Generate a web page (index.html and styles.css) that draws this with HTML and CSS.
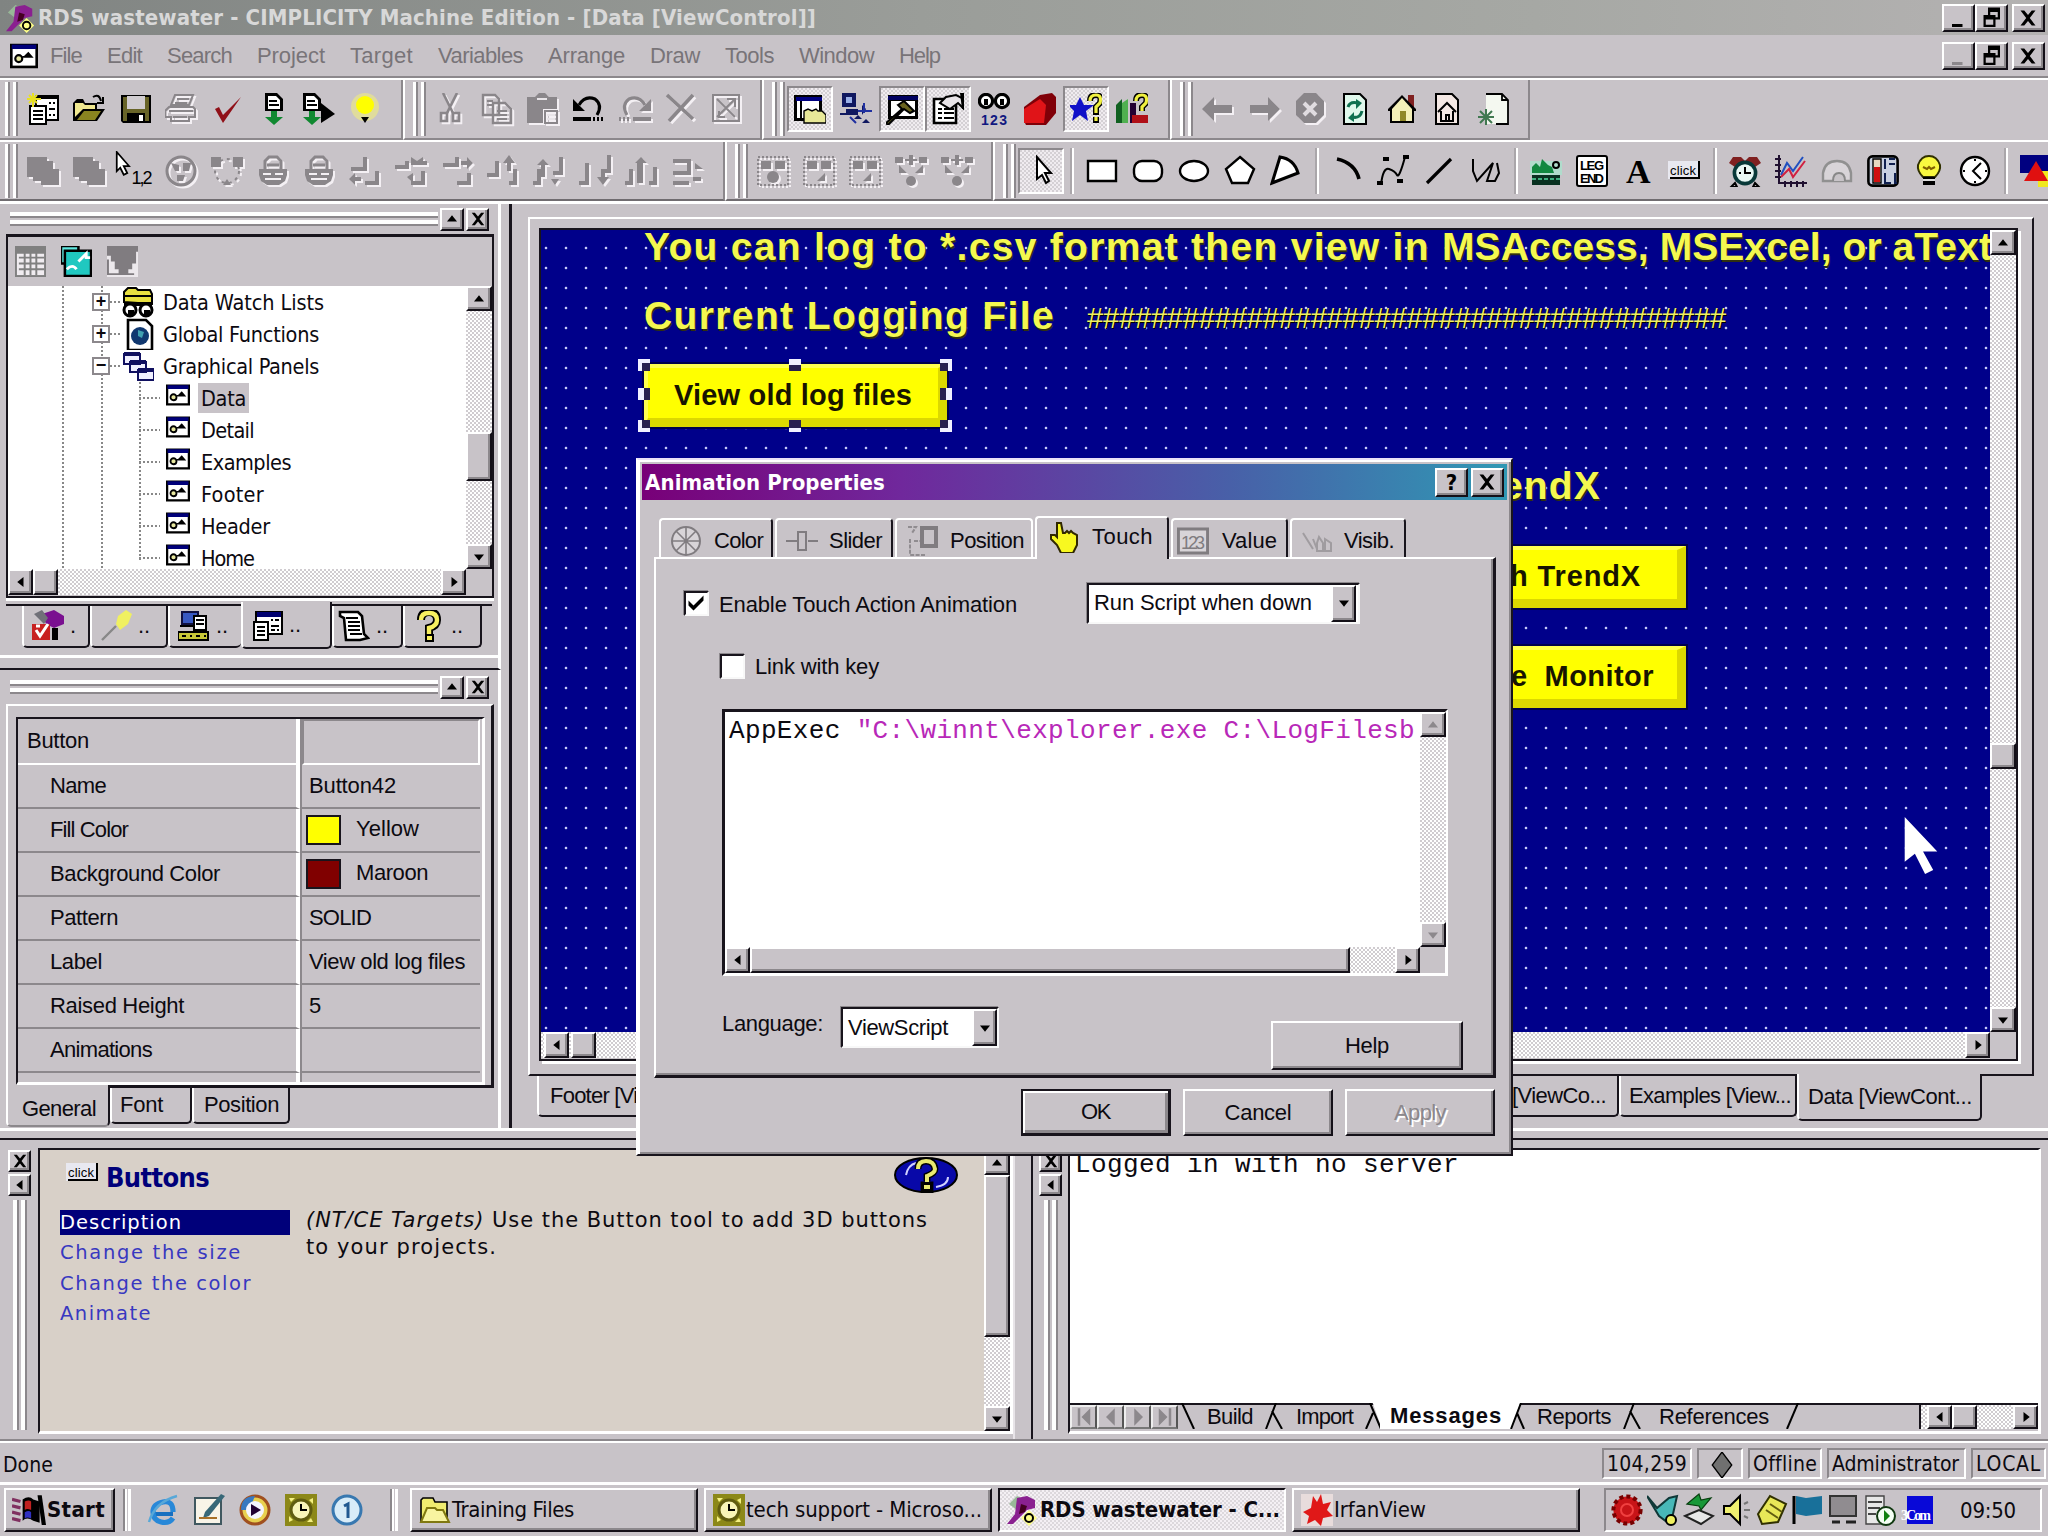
FILE: index.html
```html
<!DOCTYPE html>
<html lang="en">
<head>
    <meta charset="UTF-8">
    <title>RDS wastewater - CIMPLICITY Machine Edition</title>
    <link rel="stylesheet" href="styles.css">
</head>
<body>

<!-- Icon set, drawn on a 16x16 pixel grid -->
<svg class="defs">
    <symbol id="up" viewBox="0 0 16 16"><path d="M8 5l4 5H4z"/></symbol>
    <symbol id="down" viewBox="0 0 16 16"><path d="M4 6h8l-4 5z"/></symbol>
    <symbol id="left" viewBox="0 0 16 16"><path d="M10 4v8L5 8z"/></symbol>
    <symbol id="right" viewBox="0 0 16 16"><path d="M6 4v8l5-4z"/></symbol>
    <symbol id="first" viewBox="0 0 16 16"><path d="M13 1v14L6 8zM3 1h2v14H3z"/></symbol>
    <symbol id="prev" viewBox="0 0 16 16"><path d="M11 1v14L4 8z"/></symbol>
    <symbol id="next" viewBox="0 0 16 16"><path d="M5 1v14l7-7z"/></symbol>
    <symbol id="last" viewBox="0 0 16 16"><path d="M3 1v14l7-7zM11 1h2v14h-2z"/></symbol>
    <symbol id="close" viewBox="0 0 16 16"><path d="M3 3h2.500L8 6l2.500-3H13L9.200 8l3.800 5h-2.500L8 10l-2.500 3H3l3.800-5z"/></symbol>
    <symbol id="min" viewBox="0 0 16 16"><path d="M4 12h7v2H4z"/></symbol>
    <symbol id="restore" viewBox="0 0 16 16"><path d="M6 1h8v8h-3v5H3V6h3zM7.500 4V6H11v1.500h1.500V4zM4.500 9v3.500h5V9z" fill-rule="evenodd"/></symbol>
    <symbol id="panel" viewBox="0 0 16 16"><path fill="#000" d="M0 1h16v14H0z"/><path fill="#fff" d="M1.500 4h13v9.500h-13z"/><path fill="#00007a" d="M1 1.500h14V4H1z"/><circle cx="5" cy="9.500" r="2" fill="#e8e8a0" stroke="#000" stroke-width="1.200"/><path d="M7 8h1l2.500-2.500L13.500 9H7z"/></symbol>
    <symbol id="app" viewBox="0 0 16 16"><path d="M1 5l4-4 4 2-4 5z" fill="#98b898"/><path d="M5 2l5-1 4 2v4l-4 1-3 3-4 4H0l4-5z" fill="#8a2090"/><path d="M7 5l3 1-1 3-3 1z" fill="#402"/><path d="M11 8l4 4-4 4-4-4z" fill="#ff8"/><circle cx="11" cy="12" r="2" fill="none" stroke="#000"/></symbol>

    <symbol id="new" viewBox="0 0 16 16"><path fill="#000" d="M4 1h12v13H4z"/><path fill="#fff" d="M5 3h10v10H5z"/><path fill="#000" d="M1 6h9v10H1z"/><path fill="#fff" d="M2 7h7v8H2z"/><path d="M3 9h5M3 11h5M3 13h5M11 5h1M13 5h1M11 8h3M11 11h1M13 11h1" stroke="#000"/><path d="M3 0v7M0 3h7M1 1l4 4M5 1L1 5" stroke="#e8e020"/></symbol>
    <symbol id="project" viewBox="0 0 16 16"><path d="M2 1h14v12H2z"/><path fill="#fff" d="M3 4h12v8H3z"/><path fill="#000070" d="M3 1.500h12V4H3z"/><path d="M1 6h8v10H1z"/><path fill="#fff" d="M2 7h6v8H2z"/><path d="M3 9h4M3 11h4M3 13h4M10 5.500h1M12 5.500h2M10 8.500h4M10 10.500h2M13 10.500h1" stroke="#000"/></symbol>
    <symbol id="open" viewBox="0 0 16 16"><path d="M0 14V5l2-2h3l1 2h6v3h4l-4 6z"/><path d="M1 12V5h4l1 1h5v2H5z" fill="#f0e890"/><path d="M2 13.500L5.500 9H14l-3 4.500z" fill="#8a8420"/><path d="M10 2q3-2 4 2M15 2v3h-3" stroke="#000" fill="none"/></symbol>
    <symbol id="save" viewBox="0 0 16 16"><path d="M1 1h15v14H2l-1-1z"/><path d="M2 2h13v12H2z" fill="#686428"/><path d="M4 1.500h9V8H4z" fill="#d0ccd0"/><path d="M4 10h9v5H4z"/><path d="M10 11h2v3h-2z" fill="#fff"/></symbol>
    <symbol id="print" viewBox="0 0 16 16"><path d="M5 1h9l-2 5H3zM2 7h12l1 1v4h-3v2H3v-2H0V9z" fill="none" stroke="currentColor"/><path d="M6 3h6M5 5h6M2 9h12M4 12h7" stroke="currentColor"/></symbol>
    <symbol id="check" viewBox="0 0 16 16"><path d="M2 8l2-1 2 4 9-9-9 13z" fill="#901018"/></symbol>
    <symbol id="download" viewBox="0 0 16 16"><path d="M4 0h6l3 3v6H4z"/><path d="M5.500 1.500h4l2 2V8h-6z" fill="#fff"/><path d="M6 4h4M6 6h5" stroke="#000"/><path d="M7 9h3v3h3l-4.500 4L4 12h3z" fill="#108830"/></symbol>
    <symbol id="run" viewBox="0 0 16 16"><path d="M0 0h6l3 3v6H0z"/><path d="M1.500 1.500h4l2 2V8h-6z" fill="#fff"/><path d="M2 4h4M2 6h5" stroke="#000"/><path d="M3 9h3v3h3l-4.500 4L0 12h3z" fill="#108830"/><path d="M9 5l7 5.500L9 15z"/></symbol>
    <symbol id="glow" viewBox="0 0 16 16"><circle cx="8" cy="7" r="7" fill="#e0dc9c"/><circle cx="8" cy="6" r="4.500" fill="#ff0"/><path d="M6 12h4l-2 3z"/></symbol>
    <symbol id="cut" viewBox="0 0 16 16"><path d="M4 0l5 10M11 0L6 10" stroke="currentColor" stroke-width="1.300"/><path d="M3 10h3v4H3zM9 10h3v4H9z" fill="none" stroke="currentColor" stroke-width="1.300"/></symbol>
    <symbol id="copy" viewBox="0 0 16 16"><path d="M1 1h6l2 2v8H1zM6 5h6l3 3v7H6z" fill="none" stroke="currentColor" stroke-width="1.200"/><path d="M3 4h3M3 6h3M8 9h5M8 11h5M8 13h5" stroke="currentColor"/></symbol>
    <symbol id="paste" viewBox="0 0 16 16"><path d="M0 2h4l2-2h3l2 2h4v6H8v7H0z"/><path d="M9 9h6v6H9z" fill="none" stroke="currentColor"/><path d="M10 11h4M10 13h4M5 3h5" stroke="#e8e4e8"/></symbol>
    <symbol id="undo" viewBox="0 0 16 16"><path d="M3 6q3-5 8-3 4 3 1 8" fill="none" stroke="currentColor" stroke-width="1.500"/><path d="M0 3v6h6zM0 12h9v2H0zM10 12h1v2h-1zM12 12h1v2h-1zM14 12h1v2h-1z"/></symbol>
    <symbol id="redo" viewBox="0 0 16 16"><path d="M13 6q-3-5-8-3-4 3-1 8" fill="none" stroke="currentColor" stroke-width="1.500"/><path d="M16 3v6h-6zM7 12h9v2H7zM0 12h1v2H0zM2 12h1v2H2zM4 12h1v2H4z"/></symbol>
    <symbol id="del" viewBox="0 0 16 16"><path d="M1 1l13 12M14 1L2 14" stroke="currentColor" stroke-width="1.800"/></symbol>
    <symbol id="props" viewBox="0 0 16 16"><path d="M1 1h13v13H1z" fill="none" stroke="currentColor"/><path d="M3 3l9 9M12 3l-9 9M8 3h4v4M4 9v3h3" stroke="currentColor" fill="none"/></symbol>
    <symbol id="navigator" viewBox="0 0 16 16"><path d="M0 1h14v13H0z"/><path d="M1.500 4h11v8.500h-11z" fill="#fff"/><path d="M1 2h13v2H1z" fill="#000080"/><path d="M3 4h1v9H3z"/><path d="M5 15V9l2-1 2 1 2-1 1 1h2l2 2v4z" fill="#e8e898" stroke="#000" stroke-width=".7"/></symbol>
    <symbol id="browse" viewBox="0 0 16 16"><path d="M1 0h7v7H1zM3 8h6v3H3zM0 10h5v1H0zM7 13l2-2 2 2zM11 6l2 2-2 3zM12 8l3 1M13 13l2 2h-4zM5 12l3 3" fill="#101860"/><path d="M3 2h3v3H3z" fill="#9ab0e8"/><path d="M5 12l3 3M12 5v5M9 9h7" stroke="#2030a0"/></symbol>
    <symbol id="hammer" viewBox="0 0 16 16"><path d="M1 1h15v12H1z"/><path d="M2.500 4h12v7.500h-12z" fill="#fff"/><path d="M1 1.500h15V3.500H1z" fill="#000060"/><path d="M6 6l3-2 5 5-2 1-3-2-8 8-1-1 8-7z" fill="#6a6420" stroke="#000"/></symbol>
    <symbol id="inspect" viewBox="0 0 16 16"><path d="M1 3h11v12H1z" fill="#fff" stroke="#000" stroke-width="1.300"/><path d="M3 8h2M6 8h5M3 10h2M6 10h5M3 12.500h2M6 12.500h5" stroke="#000"/><path d="M4 5l3-3 5-1 4 2v5l-3-3-4 3z" fill="#e8e4e8" stroke="#000"/><path d="M14 0h2v8h-1z"/></symbol>
    <symbol id="watch" viewBox="0 0 16 16"><circle cx="4" cy="4" r="3.300" fill="#fff" stroke="#000" stroke-width="1.600"/><circle cx="12" cy="4" r="3.300" fill="#fff" stroke="#000" stroke-width="1.600"/><path d="M3 3h2v3H3zM11 3h2v3h-2z"/><text x="1.500" y="16" class="t-123" textLength="13">123</text></symbol>
    <symbol id="red" viewBox="0 0 16 16"><path d="M0 7L8 1l6-1 2 2v8l-5 6H1l-1-2z" fill="#800008"/><path d="M0 8l8-5 3 3-1 9H0z" fill="#e01418"/></symbol>
    <symbol id="star" viewBox="0 0 16 16"><path d="M5 2l2 4h5L8 9l1 5-4-3-4 3 1-5-3-3h4z" fill="#1010c8"/><path d="M10 4q0-3 3-3t2 4l-2 2v4M13 12v3" fill="none" stroke="#000" stroke-width="3"/><path d="M10 4q0-3 3-3t2 4l-2 2v3M13 12v2" fill="none" stroke="#f0f040" stroke-width="1.600"/></symbol>
    <symbol id="books" viewBox="0 0 16 16"><path d="M0 6l3-3v12H0z" fill="#106020"/><path d="M3 5l3-2v12H3z" fill="#50b050"/><path d="M7 5h3v10H7z" fill="#203"/><path d="M8 11h8v4H8z" fill="#b01018"/><path d="M10 4q0-3 3-3t2 4l-2 2v2" fill="none" stroke="#000" stroke-width="3"/><path d="M10 4q0-3 3-3t2 4l-2 2v2" fill="none" stroke="#f0f040" stroke-width="1.600"/></symbol>
    <symbol id="back" viewBox="0 0 16 16"><path d="M0 8l6-6v4h9v4H6v4z"/></symbol>
    <symbol id="fwd" viewBox="0 0 16 16"><path d="M16 8l-6-6v4H1v4h9v4z"/></symbol>
    <symbol id="stop" viewBox="0 0 16 16"><path d="M5 0h6l4 4v7l-4 4H5l-4-4V4z"/><path d="M5 5l6 6M11 5l-6 6" stroke="#e0dce0" stroke-width="2"/></symbol>
    <symbol id="refresh" viewBox="0 0 16 16"><path d="M2 .5h8l3 3v12H2z" fill="#e0f8ec" stroke="#000"/><path d="M4 7q1-3 5-2M11 9q-1 4-5 3" fill="none" stroke="#107050" stroke-width="1.500"/><path d="M8 3l3 2-3 3zM7 9.500v5l-3-2z" fill="#107050"/></symbol>
    <symbol id="home" viewBox="0 0 16 16"><path d="M11 1h3v6h-3z" fill="#802020"/><path d="M1 8l7-7 7 7v1h-1v6H2V9H1z"/><path d="M3 8l5-5.500L13 8v6H3z" fill="#f4f0b8"/><path d="M7 9h3v5H7z" fill="#908828"/></symbol>
    <symbol id="homepage" viewBox="0 0 16 16"><path d="M2 .5h8l3 3v12H2z" fill="#f4e8e4" stroke="#000"/><path d="M3 9.500L7.500 5l4.500 4.500M4.500 9v5h6V9M7 14v-3h1.500v3" fill="none" stroke="#000"/></symbol>
    <symbol id="newpage" viewBox="0 0 16 16"><path d="M4 .5h8l3 3v12H4z" fill="#f4f8f0"/><path d="M4 .5h8l3 3v12H9M12 .5v3h3" fill="none" stroke="#000" stroke-width=".9"/><path d="M4 8v8M0 12h8M1 9l6 6M7 9l-6 6" stroke="#407850"/></symbol>

    <symbol id="blob" viewBox="0 0 16 16"><path d="M0 1h10v2h3v4h3v8H7v-2H3v-2H0z"/></symbol>
    <symbol id="order" viewBox="0 0 16 16"><path d="M1 0v11l2-2 2 4 2-1-2-4h3z" fill="#fff" stroke="#000"/></symbol>
    <symbol id="group" viewBox="0 0 16 16"><circle cx="8" cy="8" r="7" fill="none" stroke="currentColor" stroke-width="1.500"/><path d="M3 4l4 1v3H5zM9 4h4l-1 4H9zM6 10h4l-1 3H6z"/></symbol>
    <symbol id="ungroup" viewBox="0 0 16 16"><path d="M0 1h5v5H0zM11 1h5v5h-5zM6 15l2-3 2 3z"/><circle cx="8" cy="8" r="6" fill="none" stroke="currentColor" stroke-dasharray="1.500 2"/></symbol>
    <symbol id="lock" viewBox="0 0 16 16"><path d="M4 7V3l2-2h4l2 2v4M5 5h6" fill="none" stroke="currentColor" stroke-width="1.500"/><path d="M1 7h14v3l-1 3-3 2H5l-3-2-1-3zM3 9v1h4V9zm6 0v1h4V9zm-5 2.500v1h8v-1z" fill-rule="evenodd"/></symbol>
    <symbol id="al" viewBox="0 0 16 16"><path d="M1 6h6V1h2v7H1zM8 13h5V8h2v7H8zM0 12l3-3v2h3v2H3v2z"/></symbol>
    <symbol id="alr" viewBox="0 0 16 16"><path d="M0 5h5V3h2v4H0zM8 13h5V8h2v7H8zM8 1l3 2 3-2v2h2v2H8zM6 11l3-2v5z"/></symbol>
    <symbol id="ar" viewBox="0 0 16 16"><path d="M1 4h6V1h2v5H1zM8 13h5V9h2v6H8zM16 4l-3-3v2h-3v2h3v2z"/></symbol>
    <symbol id="av" viewBox="0 0 16 16"><path d="M0 9h4V3h2v8H0zM11 13h2V7h2v8h-4zM11 0l3 4h-2v4h-2V4H8z"/></symbol>
    <symbol id="ag" viewBox="0 0 16 16"><path d="M0 13h2V7h2v8H0zM13 1h2v9h-5V8h3zM5 2l3 3H6v6H4V5H2zM11 15l-2-3h4z"/></symbol>
    <symbol id="ad" viewBox="0 0 16 16"><path d="M0 13h3V4h2v11H0zM14 0h2v9h-5V7h3zM12 15l-3-4h2V9h2v2h2z"/></symbol>
    <symbol id="ac" viewBox="0 0 16 16"><path d="M0 13h2V7h2v8H0zM12 13h2V6h2v9h-4zM8 1l3 3H9v10H6V4H5z"/></symbol>
    <symbol id="ae" viewBox="0 0 16 16"><path d="M1 2h9v2H1zM1 8h9v2H1zM1 13h8v2H1zM8 2h2v6H8zM12 4l4 3h-4zM11 11h4v2h-4z"/></symbol>
    <symbol id="tri" viewBox="0 0 16 16"><path d="M2 3h5v4H2zM9 3h5v4H9z"/><circle cx="8" cy="11" r="3"/><path d="M.5 1h15v14H.5z" fill="none" stroke="currentColor" stroke-dasharray="1 1"/></symbol>
    <symbol id="tri2" viewBox="0 0 16 16"><path d="M2 3h5v4H2zM9 3h5v4H9zM7 13l4-4v4z"/><path d="M.5 1h15v14H.5z" fill="none" stroke="currentColor" stroke-dasharray="1 1"/></symbol>
    <symbol id="spread" viewBox="0 0 16 16"><path d="M0 1h4v3H0zM12 1h4v3h-4zM7 0h2v5H7zM5 2h6v1H5zM2 5l4 4H2zM14 5l-4 4h4z"/><circle cx="8" cy="13" r="2.500"/></symbol>
    <symbol id="pointer" viewBox="0 0 16 16"><path d="M6 1v11l2.500-2 2 4 1.500-1-2-4h3z" fill="#fff" stroke="#000"/></symbol>
    <symbol id="rect" viewBox="0 0 16 16"><path d="M1 3h14v10H1z" fill="#fff" stroke="#000" stroke-width="1.200"/></symbol>
    <symbol id="rrect" viewBox="0 0 16 16"><rect x="1" y="3" width="14" height="10" rx="4" fill="#fff" stroke="#000" stroke-width="1.200"/></symbol>
    <symbol id="oval" viewBox="0 0 16 16"><ellipse cx="8" cy="8" rx="7" ry="5" fill="#fff" stroke="#000" stroke-width="1.200"/></symbol>
    <symbol id="penta" viewBox="0 0 16 16"><path d="M8 1l7 6-3 7H4L1 7z" fill="#fff" stroke="#000" stroke-width="1.200"/></symbol>
    <symbol id="wedge" viewBox="0 0 16 16"><path d="M5 1q7 1 9 8L1 14z" fill="#fff" stroke="#000" stroke-width="1.500"/></symbol>
    <symbol id="arc" viewBox="0 0 16 16"><path d="M3 2q9 2 11 10" fill="none" stroke="#000" stroke-width="1.800"/></symbol>
    <symbol id="curve" viewBox="0 0 16 16"><path d="M2 15q1-9 4-8t4 3 4-9" fill="none" stroke="#000"/><path d="M3 1h3v2H3zM13 0h3v2h-3zM0 13h3v2H0zM10 12h3v2h-3z"/></symbol>
    <symbol id="line" viewBox="0 0 16 16"><path d="M2 14L14 2" stroke="#000" stroke-width="1.600"/></symbol>
    <symbol id="poly" viewBox="0 0 16 16"><path d="M2 2v6l2 5 8-9-3 9h4l2-4-1-5" fill="none" stroke="#000"/></symbol>
    <symbol id="image" viewBox="0 0 16 16"><path d="M0 3h16v7H0z" fill="#b0dccc"/><path d="M1 9V6l2-2 2 2 1-4 3 3 2 1 1 3z" fill="#108840"/><path d="M1 10h14v5H1z" fill="#083020"/><path d="M1 12h14" stroke="#40b080" stroke-dasharray="2 1"/><circle cx="13" cy="5" r="1.500" fill="none" stroke="#000"/></symbol>
    <symbol id="legend" viewBox="0 0 16 16"><rect x=".5" y=".5" width="15" height="15" rx="1" fill="#fff" stroke="#000"/><text x="2" y="7.300" class="t-leg" textLength="12">LEG</text><text x="2" y="14" class="t-leg" textLength="12">END</text></symbol>
    <symbol id="text" viewBox="0 0 16 16"><text x="2" y="14" class="t-a">A</text></symbol>
    <symbol id="click" viewBox="0 0 16 16"><path d="M0 3h16v9H0z" fill="#e8e8f0"/><path d="M15 3h1v9H1v-1h14z"/><text x="1" y="10" class="t-click" textLength="13">click</text></symbol>
    <symbol id="alarm" viewBox="0 0 16 16"><path d="M0 4l2-3h4l2 2 2-2h4l2 3-3 2H3z" fill="#802020"/><circle cx="8" cy="9" r="5.300" fill="#e8f8f4" stroke="#083838" stroke-width="1.800"/><path d="M8 6v3h3M5 9h1M3 14l-2 2h3zM13 14l2 2h-3z" stroke="#000" fill="none"/></symbol>
    <symbol id="trend" viewBox="0 0 16 16"><path d="M2 0v14h14M0 2h3M0 5h3M0 8h3M0 11h3M5 13v3M8 13v3M11 13v3M14 13v3" fill="none" stroke="#201030"/><path d="M3 10l3-6 3 4 5-7" fill="none" stroke="#2050c0"/><path d="M3 11l4-4 2 4 6-8" fill="none" stroke="#d02040"/></symbol>
    <symbol id="gauge" viewBox="0 0 16 16"><path d="M1 13V9q1-6 7-6t7 6v4z" fill="#d8d4d8" stroke="#909090" stroke-width="1.200"/><path d="M6 13q0-4 3-4t3 4" fill="#c8c4c8" stroke="#888"/></symbol>
    <symbol id="level" viewBox="0 0 16 16"><rect x=".7" y=".7" width="14.600" height="14.600" rx="2" fill="#c8d0e0" stroke="#000" stroke-width="1.300"/><path d="M3 2h4v12H3z" fill="#e8d8c0" stroke="#000" stroke-width=".7"/><path d="M3.500 6h3v7.500h-3z" fill="#d01010"/><path d="M9 2v5M11 2h3M11 4.500h3M9 9v5h3M14 9v5h1" stroke="#102050" fill="none"/></symbol>
    <symbol id="bulb" viewBox="0 0 16 16"><path d="M5 11Q2 8 2.500 5 4 0.500 8 .5t5.500 4.500Q14 8 11 11z" fill="#f8f840" stroke="#303000"/><path d="M5 6l2 1 1-1 1 1 2-1" stroke="#806000" fill="none"/><path d="M5 11h6v4H5z"/><path d="M5 12.500h6" stroke="#ddd"/></symbol>
    <symbol id="clock" viewBox="0 0 16 16"><circle cx="8" cy="8" r="7" fill="#fff" stroke="#000" stroke-width="1.200"/><path d="M11 4L7 8l4 4" fill="none" stroke="#000"/><path d="M8 2v1M8 13v1M2 8h1M13 8h1" stroke="#000"/></symbol>
    <symbol id="shapes" viewBox="0 0 16 16"><path d="M0 0h16v9H0z" fill="#000080"/><path d="M9 8h10v9H9z" fill="#f0e820"/><path d="M8 3l6 10H2z" fill="#e01010"/></symbol>

    <symbol id="grid" viewBox="0 0 16 16"><path d="M0 0h16v16H0z" fill="#808080"/><path d="M1 4h14v11H1z" fill="#f0ecf0"/><path d="M2 6h13M2 9h13M2 12h13M5 3v12M8 3v12M11 3v12" stroke="#808080"/></symbol>
    <symbol id="goto" viewBox="0 0 16 16"><path d="M0 0h9v9H0z" fill="#60e8e0" stroke="#000" stroke-width="1.300"/><path d="M2 2.500h13.500v13H2z" fill="#20c8c0" stroke="#000" stroke-width="1.300"/><path d="M9 8l4-4v2h2M3 12q3-3 5 0" stroke="#fff" stroke-width="1.500" fill="none"/></symbol>
    <symbol id="grid2" viewBox="0 0 16 16"><path d="M0 0h16v16H0z" fill="#ece8ec"/><path d="M0 0h16v3h-1v6h-2v3h-2v2H6v-2H4V8H2V5H0zM0 7h1v8H0zM1 14h13v1H1z" fill="#807c80"/></symbol>
    <symbol id="watchlist" viewBox="0 0 16 16"><path d="M1 8V3l2-2h4l1 1h6l1 2v5z" fill="#e8e040" stroke="#000"/><path d="M1 5h14" stroke="#000"/><path d="M1 8h14v2H1z"/><circle cx="4" cy="12" r="3" fill="#fff" stroke="#000" stroke-width="1.500"/><circle cx="12" cy="12" r="3" fill="#fff" stroke="#000" stroke-width="1.500"/><path d="M3 12h3v3H3zM11 12h3v3h-3z"/></symbol>
    <symbol id="global" viewBox="0 0 16 16"><path d="M3 1h9l3 3v12H3z" fill="#fff" stroke="#000" stroke-width="1.300"/><circle cx="9" cy="9" r="4.500" fill="#103870"/><path d="M8 6l3 1-1 3-2-1z" fill="#40a0b0"/></symbol>
    <symbol id="panels" viewBox="0 0 16 16"><path d="M1 2h8v5H1zM4 6h8v5H4zM8 10h8v5H8z" fill="#f0f0ff" stroke="#101060"/><path d="M1 1h8v2H1zM4 5h8v2H4zM8 9h8v2H8z" fill="#101060"/></symbol>
    <symbol id="manager" viewBox="0 0 16 16"><path d="M5 2l6-2 5 3v4l-5 2-4-2z" fill="#7a1090"/><path d="M1 2l4-2 3 4-2 3z" fill="#707078"/><path d="M0 7h9v8H0z" fill="#c82020"/><path d="M2 10l2 3 4-6M2 8h2" stroke="#fff" stroke-width="1.500" fill="none"/><path d="M10 9h3v6h-3z"/></symbol>
    <symbol id="pen" viewBox="0 0 16 16"><path d="M9 3l4-3 3 2-2 5-4 3-2-3z" fill="#f0f060"/><path d="M1 15l7-7" stroke="#888" stroke-width="1.200"/></symbol>
    <symbol id="config" viewBox="0 0 16 16"><path d="M2 1h8v6H2z" fill="#3858c0" stroke="#101040"/><path d="M8 3h6v7H8z" fill="#fff" stroke="#000"/><path d="M9 5h4M9 7h4M1 8h7" stroke="#000"/><path d="M0 11h15v4H0z" fill="#c8c838" stroke="#000"/><path d="M2 13h2M6 13h1M9 13h2M13 13h1" stroke="#000"/></symbol>
    <symbol id="doc" viewBox="0 0 16 16"><path d="M1 1h9l2 2 1 9 2 2-4 1H4L3 4 1 3z" fill="#fff" stroke="#000" stroke-width="1.300"/><path d="M4 4h6M5 6h6M5 8h6M5 10h6M6 12h6" stroke="#000"/></symbol>
    <symbol id="help" viewBox="0 0 16 16"><path d="M4 5q0-4 4-4t4 4q0 3-4 4v3" fill="none" stroke="#000" stroke-width="4"/><path d="M6 12h4.500v4H6z"/><path d="M4 5q0-3.500 4-3.500T12 5q0 3-4 4v3" fill="none" stroke="#f8f060" stroke-width="2.200"/><path d="M7 13h2.500v2H7z" fill="#f8f060"/></symbol>

    <symbol id="t-color" viewBox="0 0 16 16"><circle cx="8" cy="8" r="7" fill="#d8d4d8" stroke="#807c80"/><path d="M8 1v14M1 8h14M3 3l10 10M13 3L3 13" stroke="#807c80" stroke-width=".8"/></symbol>
    <symbol id="t-slider" viewBox="0 0 16 16"><path d="M0 8h6M11 8h5" stroke="#807c80"/><path d="M6 3.500h4v9H6z" fill="none" stroke="#807c80"/></symbol>
    <symbol id="t-pos" viewBox="0 0 16 16"><path d="M8 1.500h7v9H8z" fill="none" stroke="#807c80" stroke-width="2"/><path d="M1 1h4l-2 3M2 7v8h8M4 8h3" fill="none" stroke="#908c90" stroke-dasharray="2 .7"/></symbol>
    <symbol id="t-hand" viewBox="0 0 16 16"><path d="M4 1l2 0 1 5h1l1-1 1 1 1-1 1 1 2 1v5l-2 4H6L4 12 1 9V7h2l1 1z" fill="#f8f820" stroke="#302800"/></symbol>
    <symbol id="t-value" viewBox="0 0 16 16"><path d="M.7 2h14.600v12H.7z" fill="#d8d4d8" stroke="#807c80" stroke-width="1.500"/><text x="2" y="12" class="t-val" textLength="12">123</text></symbol>
    <symbol id="t-vis" viewBox="0 0 16 16"><path d="M1 4l5 8M6 7l2 5M8 9l1-3 2 3v4H8zM12 7l3 2v4h-3z" fill="none" stroke="#a09ca0"/></symbol>

    <symbol id="win" viewBox="0 0 16 16"><path d="M5 3q3-2 5 0l3 1v10l-3-1q-3-2-5 0z"/><path d="M6 4q2-1 3 0v4q-2-1-3 0z" fill="#c02020"/><path d="M6 9q2-1 3 0v3q-2-1-3 0z" fill="#3030c0"/><path d="M0 3l4 1M0 6l4 1M0 9l4 1M0 12l4 1" stroke="#803060" stroke-width="1.500"/><path d="M12 1h2l2 14h-2z"/></symbol>
    <symbol id="ie" viewBox="0 0 16 16"><path d="M2 10h11" stroke="#1870c0" stroke-width="2"/><path d="M13 12q-2 3-6 2-4-1-4-5t5-5 5 5" fill="none" stroke="#2888d8" stroke-width="2.600"/><path d="M1 14Q4 4 15 1" stroke="#58a8d8" stroke-width="1.200" fill="none"/></symbol>
    <symbol id="desk" viewBox="0 0 16 16"><path d="M1 2h13v13H1z" fill="#f8f4e8" stroke="#405860"/><path d="M14 0l2 1-8 10-3 1 1-3z" fill="#386878"/><path d="M3 12h9" stroke="#a87028"/></symbol>
    <symbol id="media" viewBox="0 0 16 16"><circle cx="8" cy="8" r="7" fill="#e8d050" stroke="#a05020" stroke-width="1.500"/><path d="M8 1q-7 0-7 7h4z" fill="#3878c0"/><circle cx="8" cy="8" r="4.500" fill="#f4f4ff"/><path d="M6 5l5 3-5 3z" fill="#203"/></symbol>
    <symbol id="outlook" viewBox="0 0 16 16"><path d="M0 0h16v16H0z" fill="#8c8818"/><path d="M2 2h3l-2 2zM14 2v3l-2-2zM2 14v-3l2 2zM14 14h-3l2-2z" fill="#f4f080"/><circle cx="8" cy="8" r="5" fill="#f8f4b8" stroke="#605c10" stroke-width="1.500"/><path d="M8 5v3h3" fill="none" stroke="#000"/></symbol>
    <symbol id="one" viewBox="0 0 16 16"><circle cx="8" cy="8" r="7" fill="#d8ecf8" stroke="#3878b0" stroke-width="1.500"/><path d="M6.500 6l2-1v7" stroke="#205890" stroke-width="1.500" fill="none"/></symbol>
    <symbol id="folder" viewBox="0 0 16 16"><path d="M1 14V3l1-1h5l1 2h6v10z" fill="#f0ec70" stroke="#000" stroke-width=".8"/><path d="M1 14L4 7h4l1 1h3l3 6z" fill="#f8f4a0" stroke="#807810"/></symbol>
    <symbol id="irfan" viewBox="0 0 16 16"><path d="M0 0h16v16H0z" fill="#e8dcdc"/><path d="M6 1l2 3 2-4 1 5 4-1-2 4 3 3-5 1-1 4-3-3-4 2 1-4-3-2 4-2z" fill="#e01818"/></symbol>
    <symbol id="gear" viewBox="0 0 16 16"><circle cx="8" cy="8" r="6.800" fill="#c81418" stroke="#700" stroke-width="2" stroke-dasharray="2 1.500"/><circle cx="8" cy="8" r="3" fill="none" stroke="#f04040"/></symbol>
    <symbol id="tr-fish" viewBox="0 0 16 16"><path d="M0 1l5 6 6-5 4-1-2 9-3 4-4-3z" fill="#48b8b8" stroke="#103838"/><circle cx="12" cy="13" r="2.500" fill="#f0f060" stroke="#000"/></symbol>
    <symbol id="tr-green" viewBox="0 0 16 16"><path d="M1 11l7-3 7 3-6 4z" fill="#e8e8e8" stroke="#222"/><path d="M2 5l6-5 1 3 5-1-5 6-1-2z" fill="#189838" stroke="#084010" stroke-width=".6"/></symbol>
    <symbol id="tr-vol" viewBox="0 0 16 16"><path d="M2 6h3l5-5v14l-5-5H2z" fill="#f0f070" stroke="#000"/><path d="M12 5l2-1M12 8h3M12 11l2 1" stroke="#777"/></symbol>
    <symbol id="tr-note" viewBox="0 0 16 16"><path d="M1 10l6-9 8 4-4 9-8 1z" fill="#e8e858" stroke="#303000"/><path d="M5 8l6 4M7 5l6 4" stroke="#605c10"/></symbol>
    <symbol id="tr-flag" viewBox="0 0 16 16"><path d="M1 1v14" stroke="#000" stroke-width="1.500"/><path d="M2 1l5 1 8-1v9l-8 1-5-1z" fill="#18709a"/></symbol>
    <symbol id="tr-net" viewBox="0 0 16 16"><path d="M1 1h13v10H1z" fill="#908c90" stroke="#333"/><path d="M2 14h4M9 14h5" stroke="#222" stroke-width="1.500"/></symbol>
    <symbol id="tr-srv" viewBox="0 0 16 16"><path d="M1 1h9v14H1z" fill="#e8e8e8" stroke="#444" stroke-width=".7"/><path d="M2 4h7M2 7h6M2 10h4" stroke="#444"/><circle cx="11" cy="11" r="4.500" fill="#f4fff4" stroke="#103810"/><path d="M10 8l3 3-3 3z" fill="#108010"/></symbol>
    <symbol id="tr-com" viewBox="0 0 16 16"><path d="M3 1h13v14H3z" fill="#0808d8"/><text x="0" y="13" class="t-com" textLength="15">3Com</text></symbol>
</svg>

<header class="titlebar">
    <svg class="app-icon"><use href="#app"/></svg>
    <span class="caption" data-w="778">RDS wastewater - CIMPLICITY Machine Edition - [Data [ViewControl]]</span>
    <span class="winbtn"><svg><use href="#min"/></svg></span>
    <span class="winbtn"><svg><use href="#restore"/></svg></span>
    <span class="winbtn gap"><svg><use href="#close"/></svg></span>
</header>

<nav class="menubar">
    <svg class="doc-icon"><use href="#panel"/></svg>
    <span data-w="32">File</span>
    <span data-w="35">Edit</span>
    <span data-w="65">Search</span>
    <span data-w="68">Project</span>
    <span data-w="63">Target</span>
    <span data-w="85">Variables</span>
    <span data-w="77">Arrange</span>
    <span data-w="50">Draw</span>
    <span data-w="49">Tools</span>
    <span data-w="75">Window</span>
    <span data-w="41">Help</span>
    <span class="winbtn push dim"><svg><use href="#min"/></svg></span>
    <span class="winbtn"><svg><use href="#restore"/></svg></span>
    <span class="winbtn gap"><svg><use href="#close"/></svg></span>
</nav>

<div class="toolbar">
    <div class="group g1"><i class="grip"></i>
        <b><svg><use href="#new"/></svg></b><b><svg><use href="#open"/></svg></b><b><svg><use href="#save"/></svg></b><b class="off"><svg><use href="#print"/></svg></b><b><svg><use href="#check"/></svg></b><b><svg><use href="#download"/></svg></b><b><svg><use href="#run"/></svg></b><b><svg><use href="#glow"/></svg></b>
    </div>
    <div class="group g2"><i class="grip"></i>
        <b class="off"><svg><use href="#cut"/></svg></b><b class="off"><svg><use href="#copy"/></svg></b><b class="off"><svg><use href="#paste"/></svg></b><b><svg><use href="#undo"/></svg></b><b class="off"><svg><use href="#redo"/></svg></b><b class="off"><svg><use href="#del"/></svg></b><b class="off"><svg><use href="#props"/></svg></b>
    </div>
    <div class="group g3"><i class="grip"></i>
        <b class="on"><svg><use href="#navigator"/></svg></b><b><svg><use href="#browse"/></svg></b><b class="on"><svg><use href="#hammer"/></svg></b><b class="on"><svg><use href="#inspect"/></svg></b><b><svg><use href="#watch"/></svg></b><b><svg><use href="#red"/></svg></b><b class="on"><svg><use href="#star"/></svg></b><b><svg><use href="#books"/></svg></b>
    </div>
    <div class="group g4"><i class="grip"></i>
        <b class="off"><svg><use href="#back"/></svg></b><b class="off"><svg><use href="#fwd"/></svg></b><b class="off"><svg><use href="#stop"/></svg></b><b><svg><use href="#refresh"/></svg></b><b><svg><use href="#home"/></svg></b><b><svg><use href="#homepage"/></svg></b><b><svg><use href="#newpage"/></svg></b>
    </div>
</div>

<div class="toolbar second">
    <div class="group g5"><i class="grip"></i>
        <b class="off"><svg><use href="#blob"/></svg></b><b class="off"><svg><use href="#blob"/></svg></b><b class="order"><svg><use href="#order"/></svg>1,2</b><b class="off"><svg><use href="#group"/></svg></b><b class="off"><svg><use href="#ungroup"/></svg></b><b class="off"><svg><use href="#lock"/></svg></b><b class="off"><svg><use href="#lock"/></svg></b><b class="off"><svg><use href="#al"/></svg></b><b class="off"><svg><use href="#alr"/></svg></b><b class="off"><svg><use href="#ar"/></svg></b><b class="off"><svg><use href="#av"/></svg></b><b class="off"><svg><use href="#ag"/></svg></b><b class="off"><svg><use href="#ad"/></svg></b><b class="off"><svg><use href="#ac"/></svg></b><b class="off"><svg><use href="#ae"/></svg></b>
    </div>
    <div class="group g6"><i class="grip"></i>
        <b class="off"><svg><use href="#tri"/></svg></b><b class="off"><svg><use href="#tri2"/></svg></b><b class="off"><svg><use href="#tri2"/></svg></b><b class="off"><svg><use href="#spread"/></svg></b><b class="off"><svg><use href="#spread"/></svg></b>
    </div>
    <div class="group g7"><i class="grip"></i>
        <b class="on"><svg><use href="#pointer"/></svg></b><u></u>
        <b><svg><use href="#rect"/></svg></b><b><svg><use href="#rrect"/></svg></b><b><svg><use href="#oval"/></svg></b><b><svg><use href="#penta"/></svg></b><b><svg><use href="#wedge"/></svg></b><u></u>
        <b><svg><use href="#arc"/></svg></b><b><svg><use href="#curve"/></svg></b><b><svg><use href="#line"/></svg></b><b><svg><use href="#poly"/></svg></b><u></u>
        <b><svg><use href="#image"/></svg></b><b><svg><use href="#legend"/></svg></b><b><svg><use href="#text"/></svg></b><b><svg><use href="#click"/></svg></b><u></u>
        <b><svg><use href="#alarm"/></svg></b><b><svg><use href="#trend"/></svg></b><b><svg><use href="#gauge"/></svg></b><b><svg><use href="#level"/></svg></b><b><svg><use href="#bulb"/></svg></b><b><svg><use href="#clock"/></svg></b><u></u>
        <b><svg><use href="#shapes"/></svg></b>
    </div>
</div>

<main class="workspace">
    <aside class="dock">
        <section class="pane nav-pane">
            <div class="pane-grip"><i class="ridge"></i><span class="sb-btn"><svg><use href="#up"/></svg></span><span class="sb-btn"><svg><use href="#close"/></svg></span></div>
            <div class="nav-frame">
                <div class="nav-tools"><svg><use href="#grid"/></svg><svg><use href="#goto"/></svg><svg><use href="#grid2"/></svg></div>
                <div class="nav-body">
                    <ul class="tree">
                        <li><i class="exp">+</i><i class="dots"></i><svg><use href="#watchlist"/></svg><span data-w="161">Data Watch Lists</span></li>
                        <li><i class="exp">+</i><i class="dots"></i><svg><use href="#global"/></svg><span data-w="156">Global Functions</span></li>
                        <li><i class="exp">&minus;</i><i class="dots"></i><svg><use href="#panels"/></svg><span data-w="156">Graphical Panels</span></li>
                        <li class="leaf"><i class="dots"></i><svg><use href="#panel"/></svg><span class="sel"><span data-w="45">Data</span></span></li>
                        <li class="leaf"><i class="dots"></i><svg><use href="#panel"/></svg><span data-w="53">Detail</span></li>
                        <li class="leaf"><i class="dots"></i><svg><use href="#panel"/></svg><span data-w="90">Examples</span></li>
                        <li class="leaf"><i class="dots"></i><svg><use href="#panel"/></svg><span data-w="63">Footer</span></li>
                        <li class="leaf"><i class="dots"></i><svg><use href="#panel"/></svg><span data-w="69">Header</span></li>
                        <li class="leaf"><i class="dots"></i><svg><use href="#panel"/></svg><span data-w="53">Home</span></li>
                    </ul>
                    <div class="vscroll nav-v"><span class="sb-btn"><svg><use href="#up"/></svg></span><span class="thumb"></span><span class="sb-btn end"><svg><use href="#down"/></svg></span></div>
                </div>
                <div class="hscroll nav-h"><span class="sb-btn"><svg><use href="#left"/></svg></span><span class="thumb"></span><span class="sb-btn end"><svg><use href="#right"/></svg></span><span class="corner"></span></div>
            </div>
            <div class="nav-tabs">
                <span class="tab w1"><svg><use href="#manager"/></svg>.</span>
                <span class="tab w2"><svg><use href="#pen"/></svg>..</span>
                <span class="tab w3"><svg><use href="#config"/></svg>..</span>
                <span class="tab w4 active"><svg><use href="#project"/></svg>..</span>
                <span class="tab w5"><svg><use href="#doc"/></svg>..</span>
                <span class="tab w6"><svg><use href="#help"/></svg>..</span>
            </div>
        </section>
        <section class="pane">
            <div class="pane-grip"><i class="ridge"></i><span class="sb-btn"><svg><use href="#up"/></svg></span><span class="sb-btn"><svg><use href="#close"/></svg></span></div>
            <div class="insp-frame">
                <div class="insp">
                    <div class="name head"><span data-w="62">Button</span></div><div class="val head"></div>
                    <div class="name"><span data-w="56">Name</span></div><div class="val"><span data-w="87">Button42</span></div>
                    <div class="name"><span data-w="78">Fill Color</span></div><div class="val sw"><i class="yellow"></i><span data-w="63">Yellow</span></div>
                    <div class="name"><span data-w="170">Background Color</span></div><div class="val sw"><i class="maroon"></i><span data-w="72">Maroon</span></div>
                    <div class="name"><span data-w="68">Pattern</span></div><div class="val"><span data-w="62">SOLID</span></div>
                    <div class="name"><span data-w="52">Label</span></div><div class="val"><span data-w="156">View old log files</span></div>
                    <div class="name"><span data-w="134">Raised Height</span></div><div class="val">5</div>
                    <div class="name"><span data-w="102">Animations</span></div><div class="val"></div>
                    <div class="name rest"></div><div class="val rest"></div>
                </div>
            </div>
            <div class="insp-tabs">
                <span class="tab active"><span data-w="74">General</span></span>
                <span class="tab"><span data-w="43">Font</span></span>
                <span class="tab"><span data-w="75">Position</span></span>
            </div>
        </section>
    </aside>

    <section class="mdi">
        <div class="mdi-frame">
            <div class="mdi-inner">
                <div class="canvas">
                    <p class="c-text line1"><span data-w="798">You can log to *.csv format then view in </span><span data-w="550">MSAccess, MSExcel, or aText</span></p>
                    <p class="c-text line2" data-w="411">Current Logging File</p>
                    <p class="c-hash" data-w="639">########################################</p>
                    <div class="c-btn old"><span data-w="238">View old log files</span>
                        <i class="h tl"></i><i class="h tc"></i><i class="h tr"></i><i class="h ml"></i><i class="h mr"></i><i class="h bl"></i><i class="h bc"></i><i class="h br"></i>
                    </div>
                    <p class="c-text line3" data-w="100">endX</p>
                    <div class="c-btn trend"><span data-w="131">h TrendX</span></div>
                    <div class="c-btn monitor"><span data-w="143">e&nbsp; Monitor</span></div>
                    <svg class="cursor" viewBox="0 0 16 28"><path d="M0 0v22l5-4 5 10 4-2-5-9h7z" fill="#fff"/></svg>
                </div>
                <div class="vscroll mdi-v"><span class="sb-btn"><svg><use href="#up"/></svg></span><span class="thumb"></span><span class="sb-btn end"><svg><use href="#down"/></svg></span></div>
                <div class="hscroll mdi-h"><span class="sb-btn"><svg><use href="#left"/></svg></span><span class="thumb"></span><span class="sb-btn end"><svg><use href="#right"/></svg></span></div>
                <span class="corner"></span>
            </div>
        </div>
        <div class="mdi-tabs">
            <span class="tab"><span data-w="168">Footer [ViewCon...</span></span>
            <span class="tab second-tab"><span data-w="94">[ViewCo...</span></span>
            <span class="tab"><span data-w="162">Examples [View...</span></span>
            <span class="tab active"><span data-w="164">Data [ViewCont...</span></span>
        </div>
    </section>
</main>
<div class="hsplit"></div>

<section class="lower">
    <div class="side-grip"><span class="sb-btn"><svg><use href="#close"/></svg></span><span class="sb-btn"><svg><use href="#left"/></svg></span><i class="vridge"></i></div>
    <div class="companion">
        <div class="comp-body">
            <div class="comp-head"><svg class="click-ico"><use href="#click"/></svg><h1 data-w="103">Buttons</h1>
                <svg class="helpball" viewBox="0 0 32 18"><ellipse cx="16" cy="9" rx="15.500" ry="8.500" fill="#0808a8" stroke="#000"/><path d="M6 9q1-5 5-6M21 15q6-1 6-5" stroke="#d0d0ff" fill="none"/><path d="M12 6q0-4 4-4t4.500 4q0 2-4 3.500v2.500M15 14h3v2.500h-3z" fill="none" stroke="#000" stroke-width="3.400"/><path d="M12 6q0-4 4-4t4.500 4q0 2-4 3.500v3M15 15h3" fill="none" stroke="#e8e870" stroke-width="2"/></svg>
            </div>
            <div class="comp-cols">
                <ul class="topics">
                    <li class="cur"><span data-w="122">Description</span></li>
                    <li><span data-w="182">Change the size</span></li>
                    <li><span data-w="192">Change the color</span></li>
                    <li><span data-w="92">Animate</span></li>
                </ul>
                <p class="desc"><span data-w="622"><em>(NT/CE Targets)</em> Use the Button tool to add 3D buttons</span><br><span data-w="191">to your projects.</span></p>
            </div>
        </div>
        <div class="vscroll comp-v"><span class="sb-btn"><svg><use href="#up"/></svg></span><span class="thumb"></span><span class="sb-btn end"><svg><use href="#down"/></svg></span></div>
    </div>
    <div class="vsplit"></div>
    <div class="side-grip right"><span class="sb-btn"><svg><use href="#close"/></svg></span><span class="sb-btn"><svg><use href="#left"/></svg></span><i class="vridge"></i></div>
    <div class="feedback">
        <pre class="log"><span data-w="384">Logged in with no server</span></pre>
        <div class="fb-tabs">
            <span class="navb"><svg><use href="#first"/></svg></span><span class="navb"><svg><use href="#prev"/></svg></span><span class="navb"><svg><use href="#next"/></svg></span><span class="navb"><svg><use href="#last"/></svg></span>
            <svg class="sep s0" viewBox="0 0 20 26"><path d="M4 0l12 26" stroke="#000" stroke-width="2"/></svg>
            <span data-w="46">Build</span>
            <svg class="sep" viewBox="0 0 20 26"><path d="M2 26L12 0M8 8l10 18" stroke="#000" stroke-width="2"/></svg>
            <span data-w="57">Import</span>
            <svg class="sep" viewBox="0 0 20 26"><path d="M8 -2h12v28h-2z" fill="#fff"/><path d="M2 26L9 10M6 0l11 26" stroke="#000" stroke-width="2"/></svg>
            <strong><span data-w="112">Messages</span></strong>
            <svg class="sep" viewBox="0 0 20 26"><path d="M0 -2h14L4 26H0z" fill="#fff"/><path d="M4 26L14 0M10 10l7 16" stroke="#000" stroke-width="2"/></svg>
            <span data-w="74">Reports</span>
            <svg class="sep" viewBox="0 0 20 26"><path d="M2 26L12 0M8 8l10 18" stroke="#000" stroke-width="2"/></svg>
            <span class="refs" data-w="110">References</span>
            <svg class="sep s9" viewBox="0 0 20 26"><path d="M4 26L15 0" stroke="#000" stroke-width="2"/></svg>
            <div class="hscroll fb-h"><span class="sb-btn"><svg><use href="#left"/></svg></span><span class="thumb"></span><span class="sb-btn end"><svg><use href="#right"/></svg></span></div>
        </div>
    </div>
</section>

<footer class="statusbar">
    <span class="done" data-w="50">Done</span>
    <span class="cell k1"><span data-w="80">104,259</span></span>
    <span class="cell k2"><svg viewBox="0 0 16 16"><path d="M8 0l6 8-6 8-6-8z" fill="#707070" stroke="#000" stroke-width=".8"/></svg></span>
    <span class="cell k3"><span data-w="64">Offline</span></span>
    <span class="cell k4"><span data-w="127">Administrator</span></span>
    <span class="cell k5"><span data-w="65">LOCAL</span></span>
</footer>

<footer class="taskbar">
    <span class="start"><svg><use href="#win"/></svg><span data-w="58">Start</span></span>
    <i class="tgrip"></i>
    <span class="quick"><svg><use href="#ie"/></svg><svg><use href="#desk"/></svg><svg><use href="#media"/></svg><svg><use href="#outlook"/></svg><svg><use href="#one"/></svg></span>
    <i class="tgrip two"></i>
    <span class="task"><svg><use href="#folder"/></svg><span data-w="122">Training Files</span></span>
    <span class="task"><svg><use href="#outlook"/></svg><span data-w="236">tech support - Microso...</span></span>
    <span class="task active"><svg><use href="#app"/></svg><span data-w="240">RDS wastewater - C...</span></span>
    <span class="task"><svg><use href="#irfan"/></svg><span data-w="92">IrfanView</span></span>
    <span class="tray"><svg><use href="#gear"/></svg><svg><use href="#tr-fish"/></svg><svg><use href="#tr-green"/></svg><svg><use href="#tr-vol"/></svg><svg><use href="#tr-note"/></svg><svg><use href="#tr-flag"/></svg><svg><use href="#tr-net"/></svg><svg><use href="#tr-srv"/></svg><svg><use href="#tr-com"/></svg><span class="time"><span data-w="56">09:50</span></span></span>
</footer>

<div class="dialog">
    <div class="dlg-title"><span data-w="240">Animation Properties</span><span class="winbtn push q">?</span><span class="winbtn"><svg><use href="#close"/></svg></span></div>
    <div class="dlg-tabs">
        <span class="dtab d1"><svg><use href="#t-color"/></svg><span data-w="49">Color</span></span>
        <span class="dtab d2"><svg><use href="#t-slider"/></svg><span data-w="53">Slider</span></span>
        <span class="dtab d3"><svg><use href="#t-pos"/></svg><span data-w="74">Position</span></span>
        <span class="dtab d4 active"><svg><use href="#t-hand"/></svg><span data-w="61">Touch</span></span>
        <span class="dtab d5"><svg><use href="#t-value"/></svg><span data-w="55">Value</span></span>
        <span class="dtab d6"><svg><use href="#t-vis"/></svg><span data-w="50">Visib.</span></span>
    </div>
    <div class="dlg-page">
        <div class="row r1"><i class="cb"><svg viewBox="0 0 16 16"><path d="M2 6l4 4 8-8v4l-8 8-4-4z"/></svg></i><span class="enable" data-w="298">Enable Touch Action Animation</span>
            <span class="combo action"><span data-w="218">Run Script when down</span><span class="sb-btn"><svg><use href="#down"/></svg></span></span></div>
        <div class="row r2"><i class="cb"></i><span data-w="124">Link with key</span></div>
        <div class="editor">
            <pre class="code"><span data-w="686">AppExec <span class="str">"C:\winnt\explorer.exe C:\LogFilesb</span></span></pre>
            <div class="vscroll"><span class="sb-btn dim"><svg><use href="#up"/></svg></span><span class="sb-btn end dim"><svg><use href="#down"/></svg></span></div>
            <div class="hscroll ed-h"><span class="sb-btn"><svg><use href="#left"/></svg></span><span class="thumb"></span><span class="sb-btn end"><svg><use href="#right"/></svg></span></div>
            <span class="corner"></span>
        </div>
        <div class="row r3"><span class="lang" data-w="101">Language:</span>
            <span class="combo small"><span data-w="100">ViewScript</span><span class="sb-btn"><svg><use href="#down"/></svg></span></span>
            <span class="push-btn help"><span data-w="44">Help</span></span></div>
    </div>
    <div class="dlg-foot">
        <span class="push-btn default"><span data-w="29">OK</span></span>
        <span class="push-btn"><span data-w="67">Cancel</span></span>
        <span class="push-btn disabled"><span data-w="52">Apply</span></span>
    </div>
</div>

<script>
    // Space each label out to the width given in data-w
    document.querySelectorAll('[data-w]').forEach(function(el) {
        const range = document.createRange();
        range.selectNodeContents(el);
        const natural = range.getBoundingClientRect().width;
        const count = el.textContent.length;
        el.style.letterSpacing = ((el.dataset.w - natural) / count) + 'px';
    });
</script>

</body>
</html>
```
FILE: styles.css
```css
* { box-sizing: border-box; }
body {
    margin: 0;
    width: 2048px;
    height: 1536px;
    overflow: hidden;
    display: flex;
    flex-direction: column;
    position: relative;
    background: #c8c3c8;
    color: #0c0a10;
    font-family: "Liberation Sans", Arial, sans-serif;
    font-size: 22px;
    line-height: 1;
}
.defs { display: none; }
[data-w] { white-space: pre; }
ul { list-style: none; margin: 0; padding: 0; }
i { font-style: normal; }
svg { display: block; flex: none; }

/* glyph text used inside icons */
.t-123 { font: bold 7px "Liberation Sans", sans-serif; fill: #101880; }
.t-leg { font: bold 6.5px "Liberation Sans", sans-serif; }
.t-a { font: bold 17px "Liberation Serif", serif; }
.t-click { font: 6.5px "Liberation Sans", sans-serif; }
.t-val { font: 9px "Liberation Sans", sans-serif; fill: #807c80; }
.t-com { font: bold 7px "Liberation Serif", serif; fill: #fff; }

/* raised boxes */
.winbtn, .sb-btn, .thumb, .push-btn {
    background: #c8c3c8;
    border: 2px solid;
    border-color: #fff #141018 #141018 #fff;
    box-shadow: inset -2px -2px 0 #8c888c;
    display: flex;
    align-items: center;
    justify-content: center;
    flex: none;
}
.winbtn { width: 33px; height: 28px; }
.winbtn svg { width: 24px; height: 24px; margin-right: 2px; }
.winbtn.gap { margin-left: 4px; }
.winbtn.push { margin-left: auto; }
.sb-btn { width: 25px; height: 25px; }
.sb-btn svg { width: 20px; height: 20px; }
.dim svg { fill: #8c888c; }

/* title and menu */
.titlebar {
    height: 36px;
    display: flex;
    align-items: center;
    padding: 0 3px 0 6px;
    background: linear-gradient(90deg, #808482, #9a9d99 45%, #a6a8a4 75%, #b4b2b2);
    font: bold 22px "DejaVu Sans Condensed", "DejaVu Sans", sans-serif;
    font-stretch: condensed;
    color: #d8d8d8;
    border-bottom: 1px solid #c8c3c8;
}
.app-icon { width: 30px; height: 32px; margin-right: 2px; }
.caption { margin-right: auto; font-weight: bold; }
.titlebar .winbtn { color: #000; }
.menubar {
    height: 44px;
    display: flex;
    align-items: center;
    gap: 25px;
    padding: 0 3px 2px 10px;
    color: #787478;
    border-bottom: 2px solid #fff;
    box-shadow: inset 0 -2px 0 #8c888c;
}
.menubar .doc-icon { width: 28px; height: 28px; margin-right: -13px; }
.menubar .winbtn + .winbtn { margin-left: -25px; }
.menubar .winbtn.gap { margin-left: -21px; }

/* toolbars */
.toolbar {
    height: 62px;
    display: flex;
    border-bottom: 2px solid #fff;
    overflow: hidden;
}
.toolbar.second { height: 62px; border-bottom: 3px solid #fff; }
.group {
    display: flex;
    align-items: center;
    padding-left: 8px;
    border-right: 2px solid #8c888c;
    border-bottom: 2px solid #8c888c;
    border-left: 2px solid #fff;
    flex: none;
}
.toolbar.second .group { border-bottom-color: #706c70; }
.g1, .g5 { padding-left: 5px; border-left: 0; }
.g1 { width: 403px; }
.g2 { width: 359px; }
.g3 { width: 408px; }
.g4 { width: 360px; }
.g5 { width: 725px; }
.g6 { width: 268px; }
.g7 { width: 1100px; }
.grip {
    width: 13px;
    height: 54px;
    margin-right: 2px;
    background: linear-gradient(90deg, #fff 0 3px, #8c888c 3px 5px, transparent 5px 8px, #fff 8px 11px, #8c888c 11px 13px);
    flex: none;
}
.group b {
    width: 46px;
    height: 46px;
    display: flex;
    align-items: center;
    justify-content: center;
    font-weight: normal;
    flex: none;
    color: #000;
    fill: currentColor;
}
.group b svg { width: 32px; height: 32px; }
.group b.off { color: #8a868a; }
.group b.off svg { filter: drop-shadow(2px 2px 0 #f4f0f4); }
.group b.on {
    border: 2px solid;
    border-color: #8c888c #fff #fff #8c888c;
    background: repeating-conic-gradient(#f0ecf0 0 25%, #d4d0d4 0 50%) 0 0 / 4px 4px;
}
.group b.order { font-size: 18px; align-items: flex-end; letter-spacing: -2px; padding-bottom: 7px; }
.group b.order svg { width: 28px; height: 30px; margin: 0 -12px 6px -4px; }
.group u {
    width: 2px;
    height: 46px;
    margin: 0 5px 0 8px;
    background: #fff;
    box-shadow: -2px 0 0 #aaa6aa;
    flex: none;
}

/* left dock */
.workspace { height: 924px; display: flex; }
.dock {
    width: 512px;
    display: flex;
    flex-direction: column;
    border-right: 3px solid #18141c;
    flex: none;
}
.pane {
    width: 501px;
    padding: 0 6px;
    border-right: 3px solid #fff;
    flex: 1;
}
.nav-pane {
    flex: none;
    height: 466px;
    border-bottom: 2px solid #18141c;
}
.nav-pane::after {
    content: "";
    display: block;
    height: 3px;
    margin: 7px -6px 0;
    background: #fff;
}
.pane-grip {
    height: 30px;
    display: flex;
    align-items: center;
    gap: 2px;
    padding-left: 4px;
}
.pane-grip .sb-btn { width: 24px; height: 23px; }
.pane-grip .sb-btn:last-child { width: 23px; }
.ridge {
    width: 428px;
    height: 14px;
    background: linear-gradient(#fff 0 4px, #8c888c 4px 6px, transparent 6px 8px, #fff 8px 12px, #8c888c 12px 14px);
}
.nav-frame {
    height: 364px;
    margin-right: -2px;
    border: solid #18141c;
    border-width: 3px 2px 2px;
    box-shadow: 0 3px 0 #fff;
    display: flex;
    flex-direction: column;
}
.nav-tools {
    height: 49px;
    display: flex;
    align-items: center;
    gap: 15px;
    padding-left: 7px;
}
.nav-tools svg { width: 31px; height: 31px; }
.nav-body { height: 283px; display: flex; }
.tree {
    flex: 1;
    overflow: hidden;
    background:
        repeating-linear-gradient(#888 0 2px, transparent 2px 4px) 54px 0 / 2px 100% no-repeat,
        repeating-linear-gradient(#888 0 2px, transparent 2px 4px) 93px 0 / 2px 100% no-repeat,
        repeating-linear-gradient(#888 0 2px, transparent 2px 4px) 131px 96px / 2px 178px no-repeat,
        #fff;
    font: 21.5px "DejaVu Sans Condensed", "DejaVu Sans", sans-serif;
    font-stretch: condensed;
}
.tree li { height: 32px; display: flex; align-items: center; padding-left: 84px; }
.tree li svg { width: 32px; height: 32px; margin-right: 9px; }
.tree li.leaf { padding-left: 131px; }
.tree li.leaf svg { width: 28px; height: 24px; margin: 0 9px 6px 4px; }
.exp {
    width: 18px;
    height: 18px;
    border: 2px solid #8c888c;
    background: #fff;
    font: bold 18px/13px "Liberation Sans", sans-serif;
    text-align: center;
}
.dots {
    width: 12px;
    height: 2px;
    background: repeating-linear-gradient(90deg, #888 0 2px, transparent 2px 4px);
}
.leaf .dots { width: 21px; }
.sel { background: #c8c3c8; padding: 3px 3px 2px; margin-left: -3px; }
.vscroll, .hscroll {
    display: flex;
    background: repeating-conic-gradient(#fff 0 25%, #d0ccd0 0 50%) 0 0 / 4px 4px;
}
.vscroll { flex-direction: column; width: 26px; }
.hscroll { height: 26px; }
.vscroll .end { margin-top: auto; }
.hscroll .end { margin-left: auto; }
.vscroll .sb-btn, .vscroll .thumb { width: 100%; }
.hscroll .sb-btn, .hscroll .thumb { height: 100%; width: 25px; }
.nav-v .thumb { height: 49px; margin-top: 121px; }
.corner { background: #c8c3c8; }
.nav-h .corner { width: 26px; }
.tab { display: flex; align-items: center; border: 2px solid; border-color: transparent #18141c #18141c #fff; border-radius: 0 0 5px 5px; }
.nav-tabs {
    display: flex;
    height: 44px;
    margin-top: 6px;
    padding-left: 16px;
    border-top: 2px solid #18141c;
}
.nav-tabs .tab { height: 42px; gap: 6px; padding-left: 8px; flex: none; border-top: 0; }
.nav-tabs .tab svg { width: 32px; height: 32px; }
.nav-tabs .w1 { width: 68px; }
.nav-tabs .w2 { width: 78px; }
.nav-tabs .w3 { width: 73px; border-right: 0; }
.nav-tabs .w4 { width: 91px; height: 47px; margin-top: -4px; background: #c8c3c8; }
.nav-tabs .w5 { width: 71px; padding-left: 4px; }
.nav-tabs .w6 { width: 79px; padding-left: 8px; }

/* inspector */
.nav-pane + .pane .pane-grip { height: 34px; }
.insp-frame {
    height: 384px;
    margin-right: -2px;
    padding: 11px 6px 0 8px;
    border: solid;
    border-width: 2px 3px 3px 2px;
    border-color: #fff #18141c #18141c #fff;
}
.insp {
    display: grid;
    grid-template-columns: 282px 186px;
    grid-template-rows: 46px repeat(7, 44px) 11px;
    height: 368px;
    border-top: 2px solid #18141c;
    border-left: 2px solid #18141c;
    border-right: 3px solid #fff;
    border-bottom: 3px solid #fff;
    overflow: hidden;
}
.name, .val { display: flex; align-items: center; border-bottom: 2px solid #8c888c; }
.name { padding-left: 32px; border-right: 4px solid #fff; box-shadow: 2px 0 0 #8c888c; }
.name.head { padding-left: 9px; border-bottom: 2px solid #fff; }
.val { padding-left: 7px; margin: 0 6px 0 2px; }
.val.head { border: 2px solid; border-color: #8c888c #fff #fff #8c888c; }
.rest { border-bottom: 0; }
.val.sw { padding-left: 4px; }
.val.sw span { margin-top: -2px; }
.val i { width: 35px; height: 30px; border: 2px solid #18141c; margin-right: 15px; }
.yellow { background: #ff0; }
.maroon { background: #800000; }
.insp-tabs { display: flex; height: 40px; }
.insp-tabs .tab { height: 36px; width: 82px; padding-left: 8px; border-top: 0; }
.insp-tabs .tab + .tab + .tab { width: 98px; padding-left: 10px; }
.insp-tabs .tab.active { width: 104px; height: 42px; margin-top: -3px; padding: 7px 0 0 14px; background: #c8c3c8; border-bottom-color: #8c888c; }

/* document area */
.mdi { flex: 1; padding: 13px 0 0 16px; }
.mdi-frame {
    width: 1506px;
    height: 859px;
    padding: 9px 14px 0 9px;
    border: 2px solid;
    border-color: #fff #18141c #18141c #fff;
}
.mdi-inner {
    height: 833px;
    display: grid;
    grid-template: 802px 27px / 1fr 26px;
    border: 2px solid #18141c;
    box-shadow: 3px 3px 0 #fff;
}
.canvas {
    position: relative;
    overflow: hidden;
    background: radial-gradient(circle, #c4c8f8 0 1px, transparent 1.7px) -5px 8px / 20px 20px, #00008a;
}
.canvas p { margin: 0; position: absolute; white-space: pre; }
.c-text {
    color: #f4f850;
    font-weight: bold;
    font-size: 39px;
    text-shadow: 1px 2px 0 #303010;
}
.line1 { left: 103px; top: -3px; }
.line2 { left: 103px; top: 66px; }
.line3 { left: 960px; top: 236px; }
.c-hash { left: 546px; top: 74px; font-size: 29px; color: #f0f060; text-shadow: 1px 1px 0 #000; }
.c-btn {
    position: absolute;
    display: flex;
    align-items: center;
    background: #ff0;
    border: solid;
    border-width: 4px 9px 9px 4px;
    border-color: #ffff50 #dcd800 #dcd800 #ffff50;
    outline: 2px solid #00004c;
    font-size: 29px;
    font-weight: bold;
    color: #181400;
}
.c-btn span { margin-top: 4px; }
.old { left: 103px; top: 134px; width: 303px; height: 63px; padding-left: 26px; }
.trend { left: 900px; top: 316px; width: 245px; height: 62px; justify-content: flex-end; padding-right: 36px; }
.monitor { left: 900px; top: 416px; width: 245px; height: 62px; justify-content: flex-end; padding-right: 23px; }
.h { position: absolute; width: 12px; height: 12px; background: #282050; border: 4px solid #f0f0ff; }
.tl, .tc, .tr { top: -9px; }
.ml, .mr { top: 20px; }
.bl, .bc, .br { bottom: -14px; }
.tl, .ml, .bl { left: -10px; }
.tc, .bc { left: 141px; }
.tr, .mr, .br { right: -14px; }
.tl { border-right: 0; border-bottom: 0; }
.tc { border-left: 0; border-right: 0; border-bottom: 0; border-top-width: 6px; }
.tr { border-left: 0; border-bottom: 0; }
.ml { border-width: 0 0 0 6px; }
.mr { border-width: 0 6px 0 0; }
.bl { border-right: 0; border-top: 0; }
.bc { border-width: 0 0 4px; }
.br { border-left: 0; border-top: 0; }
.cursor { position: absolute; left: 1363px; top: 587px; width: 34px; height: 57px; }
.mdi-v .thumb { height: 26px; margin-top: 488px; }
.mdi-h .thumb { margin-left: 2px; }
.mdi-h { padding-left: 3px; }
.mdi-tabs { display: flex; width: 1454px; padding-left: 9px; }
.mdi-tabs .tab { height: 41px; padding-left: 11px; border-top: 0; width: 180px; flex: none; }
.mdi-tabs .second-tab { width: 120px; margin-left: auto; }
.mdi-tabs .tab:nth-child(3) { width: 178px; padding-left: 8px; }
.mdi-tabs .tab.active { width: 185px; height: 47px; margin-top: -2px; padding-left: 9px; background: #c8c3c8; }

/* lower panels */
.hsplit { height: 12px; border-top: 3px solid #fff; border-bottom: 2px solid #18141c; flex: none; }
.lower { height: 301px; display: flex; border-bottom: 2px solid #8c888c; }
.side-grip { width: 38px; padding: 10px 0 0 8px; flex: none; }
.side-grip .sb-btn { width: 23px; height: 22px; margin-bottom: 2px; }
.vridge {
    display: block;
    width: 14px;
    height: 230px;
    margin: 4px 0 0 5px;
    background: linear-gradient(90deg, #fff 0 4px, #8c888c 4px 6px, transparent 6px 8px, #fff 8px 12px, #8c888c 12px 14px);
}
.companion, .feedback {
    margin-top: 8px;
    height: 286px;
    border: solid;
    border-width: 2px 3px 3px 2px;
    border-color: #18141c #fff #fff #18141c;
}
.companion { width: 975px; display: flex; background: #d8d0c8; font-family: "DejaVu Sans", sans-serif; }
.comp-body { flex: 1; padding: 7px 26px 0 20px; }
.comp-v .thumb { height: 162px; }
.comp-head { display: flex; }
.click-ico { width: 32px; height: 32px; margin: 0 8px 0 6px; }
.comp-head h1 { margin: 7px auto 0 0; font: bold 27px "DejaVu Sans Condensed", "DejaVu Sans", sans-serif; font-stretch: condensed; line-height: 1; color: #00007a; }
.helpball { width: 64px; height: 36px; }
.comp-cols { display: flex; margin-top: 13px; }
.topics { width: 230px; font-size: 19.5px; color: #3838c0; }
.topics li { height: 30.5px; line-height: 28px; }
.topics .cur { height: 25px; line-height: 26px; background: #00007a; color: #fff; margin: 4px 0; }
.desc { margin: 1px 0 0 16px; font-size: 21px; line-height: 27px; white-space: nowrap; }
.desc [data-w] { display: inline-block; }
.vsplit { width: 20px; border-left: 2px solid #e8e4e8; border-right: 2px solid #18141c; flex: none; }
.side-grip.right { width: 35px; padding-left: 6px; }
.feedback { width: 973px; background: #fff; }
.log { margin: 0; height: 253px; padding: 0 0 0 5px; }
.log, .code { font-family: "Liberation Mono", "Courier New", monospace; font-size: 26px; line-height: 30px; }
.fb-tabs { display: flex; height: 28px; padding-bottom: 2px; background: #c8c3c8; border-top: 2px solid #18141c; align-items: center; }
.fb-tabs .navb { width: 27px; height: 24px; border: 2px solid; border-color: #eee #555 #777 #eee; fill: #8c888c; display: flex; justify-content: center; align-items: center; }
.navb svg { width: 20px; height: 20px; }
.fb-tabs .sep { width: 20px; height: 26px; margin: -2px 12px 0 11px; }
.fb-tabs .s0 { margin: -2px 9px 0 0; }
.fb-tabs strong { background: #fff; margin: -4px -13px 0 -16px; padding: 4px 7px 3px 10px; height: 28px; }
.fb-tabs strong + .sep { margin-right: 10px; }
.fb-tabs .refs { margin-left: 5px; }
.fb-tabs .s9 { margin-left: 14px; }
.fb-h { width: 119px; height: 24px; margin-left: auto; border-left: 2px solid #18141c; padding-left: 6px; }

/* status and task bar */
.statusbar, .taskbar { font-family: "DejaVu Sans Condensed", "DejaVu Sans", sans-serif; font-stretch: condensed; font-size: 21px; }
.statusbar {
    height: 44px;
    display: flex;
    align-items: center;
    gap: 5px;
    padding: 3px 2px 1px 3px;
    border-top: 2px solid #fff;
    border-bottom: 3px solid #fff;
}
.done { margin: 3px auto 0 0; }
.cell { height: 31px; display: flex; align-items: center; padding: 2px 0 0 3px; border: 2px solid; border-color: #8c888c #fff #fff #8c888c; flex: none; }
.cell svg { width: 26px; height: 26px; margin-left: 7px; }
.k1 { width: 90px; }
.k2 { width: 46px; }
.k3 { width: 74px; }
.k4 { width: 139px; }
.k5 { width: 75px; }
.taskbar { flex: 1; display: flex; align-items: center; padding: 0 6px 2px 4px; font-size: 22px; }
.start, .task {
    height: 44px;
    display: flex;
    align-items: center;
    border: 2px solid;
    border-color: #fff #141018 #141018 #fff;
    box-shadow: inset -2px -2px 0 #8c888c;
    flex: none;
}
.start { width: 111px; padding-left: 6px; font-weight: bold; }
.start svg { width: 34px; height: 34px; margin-right: 1px; }
.tgrip { width: 8px; height: 42px; margin: 0 12px 0 8px; border-left: 2px solid #8c888c; background: linear-gradient(90deg, #fff 0 2px, transparent 2px 3px, #fff 3px); flex: none; }
.quick { display: flex; gap: 14px; padding-left: 4px; }
.quick svg, .tray svg, .task svg { width: 32px; height: 34px; }
.tgrip.two { margin: 0 12px 0 27px; }
.task { width: 288px; margin-right: 6px; padding-left: 7px; }
.task svg { margin-right: 1px; }
.task.active {
    font-weight: bold;
    border-color: #141018 #fff #fff #141018;
    box-shadow: none;
    background: repeating-conic-gradient(#f4f0f4 0 25%, #dcd8dc 0 50%) 0 0 / 4px 4px;
}
.tray {
    width: 438px;
    height: 44px;
    margin-left: auto;
    display: flex;
    align-items: center;
    gap: 4.2px;
    padding-left: 5px;
    border: 2px solid;
    border-color: #8c888c #fff #fff #8c888c;
}
.time { margin: 2px 24px 0 auto; }

/* animation dialog */
.dialog {
    position: absolute;
    left: 636px;
    top: 458px;
    width: 877px;
    height: 698px;
    padding: 4px;
    background: #c8c3c8;
    border: 2px solid;
    border-color: #e8e0f8 #18141c #18141c #fff;
    box-shadow: inset 2px 2px 0 #fff, inset -2px -2px 0 #8c888c;
}
.dlg-title {
    height: 36px;
    display: flex;
    align-items: center;
    padding: 0 3px 0 3px;
    background: linear-gradient(90deg, #780078, #70289c 30%, #4860a8 68%, #3098b4);
    color: #fff;
    font: bold 22px "DejaVu Sans Condensed", "DejaVu Sans", sans-serif;
    font-stretch: condensed;
}
.dlg-title .winbtn { height: 29px; margin-left: 3px; }
.dlg-title .winbtn.push { margin-left: auto; }
.winbtn.q { color: #000; }
.dlg-tabs { display: flex; height: 57px; padding-left: 17px; align-items: flex-end; }
.dtab {
    height: 39px;
    display: flex;
    align-items: center;
    border: 2px solid;
    border-color: #fff #18141c transparent #fff;
    border-bottom: 0;
    border-radius: 4px 4px 0 0;
    margin-right: 2px;
    padding: 4px 0 0 9px;
    flex: none;
}
.dtab svg { width: 32px; height: 32px; }
.dtab span { margin-left: auto; }
.d1 { width: 114px; padding-right: 8px; }
.d2 { width: 118px; padding-right: 9px; }
.d3 { width: 138px; padding-right: 7px; border-right-color: #fff; }
.d4 { width: 134px; height: 43px; margin-bottom: -2px; padding: 3px 14px 6px 12px; background: #c8c3c8; }
.d5 { width: 117px; padding-right: 9px; padding-left: 4px; }
.d6 { width: 116px; padding-right: 10px; }
.dlg-page {
    width: 842px;
    height: 521px;
    margin-left: 12px;
    padding: 23px 0 0 28px;
    border: solid;
    border-width: 2px 3px 3px 2px;
    border-color: #fff #18141c #18141c #fff;
    box-shadow: inset -2px -2px 0 #8c888c;
}
.row { display: flex; align-items: center; }
.cb {
    width: 25px;
    height: 25px;
    background: #fff;
    border: 2px solid;
    border-color: #18141c #f8f8f8 #f8f8f8 #18141c;
    box-shadow: -1px -1px 0 #8c888c;
    margin-right: 10px;
}
.cb svg { width: 20px; height: 20px; }
.enable { margin-top: 4px; }
.combo {
    height: 41px;
    display: flex;
    align-items: center;
    padding-left: 6px;
    background: #fff;
    border: 2px solid;
    border-color: #18141c #f8f8f8 #f8f8f8 #18141c;
    box-shadow: -1px -1px 0 #8c888c;
}
.combo .sb-btn { height: 100%; margin-left: auto; }
.combo.action { width: 273px; margin-left: 70px; padding-left: 5px; }
.combo.action .sb-btn { margin-right: 2px; }
.r1 { height: 42px; }
.r2 { padding-left: 36px; margin-top: 30px; }
.editor {
    width: 726px;
    height: 267px;
    margin: 30px 0 0 38px;
    display: grid;
    grid-template: 1fr 26px / 1fr 25px;
    background: #fff;
    border: 3px solid;
    border-color: #18141c #fff #fff #18141c;
}
.code { margin: 0; padding: 4px 0 0 4px; overflow: hidden; }
.str { color: #b828b8; }
.ed-h .thumb { width: 600px; }
.r3 { margin: 31px 0 0 38px; height: 41px; }
.lang { margin-bottom: 8px; }
.combo.small { width: 158px; margin-left: 18px; padding-left: 5px; }
.push-btn { width: 150px; height: 47px; }
.push-btn.help { width: 192px; height: 49px; margin: 36px 0 0 272px; }
.dlg-foot { display: flex; gap: 12px; padding: 11px 12px 0 0; justify-content: flex-end; }
.push-btn.default { border-color: #18141c; border-width: 2px 3px 3px 2px; box-shadow: inset 2px 2px 0 #fff, inset -3px -3px 0 #8c888c; }
.push-btn.disabled { color: #8c888c; text-shadow: 2px 2px 0 #fff; }
```
